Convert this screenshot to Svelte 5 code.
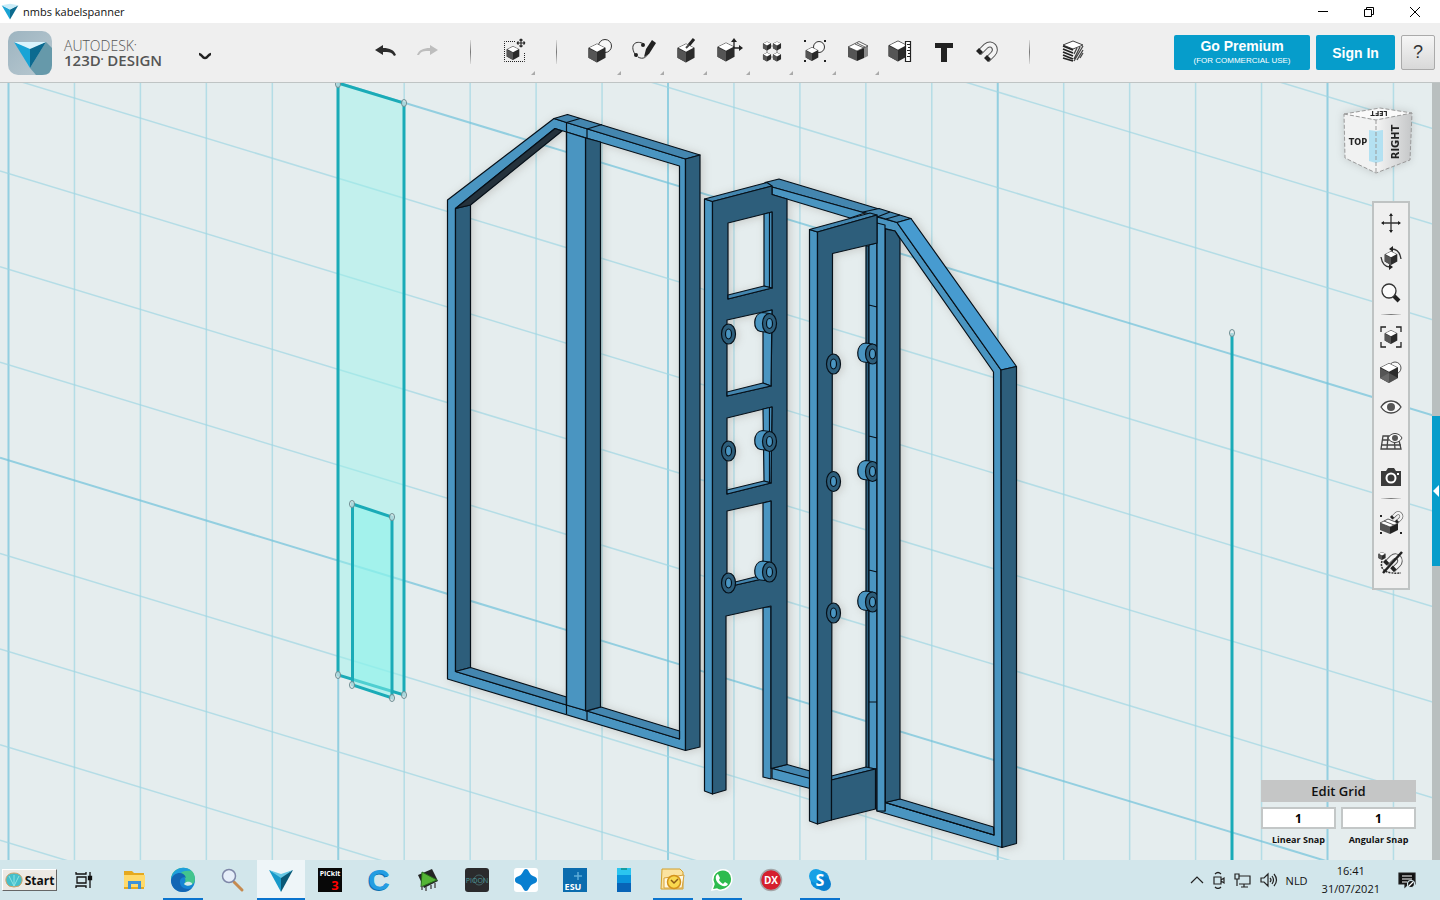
<script lang="ts">
	type Tool = { id: string; label: string; more?: boolean };

	const tools: Tool[] = [
		{ id: 'undo', label: 'Undo' },
		{ id: 'redo', label: 'Redo' },
		{ id: 'sep', label: '' },
		{ id: 'transform', label: 'Transform', more: true },
		{ id: 'sep', label: '' },
		{ id: 'primitives', label: 'Primitives', more: true },
		{ id: 'sketch', label: 'Sketch', more: true },
		{ id: 'construct', label: 'Construct', more: true },
		{ id: 'modify', label: 'Modify', more: true },
		{ id: 'pattern', label: 'Pattern', more: true },
		{ id: 'grouping', label: 'Grouping', more: true },
		{ id: 'combine', label: 'Combine', more: true },
		{ id: 'measure', label: 'Measure' },
		{ id: 'text', label: 'Text' },
		{ id: 'snap', label: 'Snap' },
		{ id: 'sep', label: '' },
		{ id: 'material', label: 'Material' }
	];

	const navGroups = [
		[
			{ id: 'pan', label: 'Pan' },
			{ id: 'orbit', label: 'Orbit' },
			{ id: 'zoom', label: 'Zoom' }
		],
		[
			{ id: 'fit', label: 'Fit' },
			{ id: 'shading', label: 'Shading' },
			{ id: 'visibility', label: 'Visibility' },
			{ id: 'grid', label: 'Grid visibility' },
			{ id: 'camera', label: 'Screenshot' }
		],
		[
			{ id: 'groupsnap', label: 'Snap when grouping' },
			{ id: 'nosnap', label: 'Snapping off' }
		]
	];

	const apps = [
		{ id: 'explorer', label: 'File Explorer' },
		{ id: 'edge', label: 'Edge', open: true },
		{ id: 'search', label: 'Search' },
		{ id: 'design', label: '123D Design', open: true, active: true },
		{ id: 'pickit', label: 'PICkit 3' },
		{ id: 'cura', label: 'Cura' },
		{ id: 'chip', label: 'Circuit' },
		{ id: 'train', label: 'Train control' },
		{ id: 'star', label: 'Diamond' },
		{ id: 'esu', label: 'ESU' },
		{ id: 'phone', label: 'Your Phone' },
		{ id: 'outlook', label: 'Outlook', open: true },
		{ id: 'whatsapp', label: 'WhatsApp', open: true },
		{ id: 'dx', label: 'DX' },
		{ id: 'skype', label: 'Skype', open: true }
	];

	const columns = Array.from({ length: 22 }, (_, i) => ({ x: 8.5 + i * 65.95, major: i % 5 === 0 }));
	const rows = Array.from({ length: 13 }, (_, i) => ({ y: -307 + i * 95.6, major: (i - 3) % 5 === 0 }));

	// openings of the ladder panel: outline, inner side, sill
	const windows = [
		['728,223 772,212 772,288 728,299', '764,214 772,212 772,288 764,286', '728,295 764,286 772,288 728,299'],
		['727,320 772,310 771,386 727,396', '763,312 772,310 771,386 763,383', '727,392 763,383 771,386 727,396'],
		['727,418 772,407 771,483 727,494', '763,409 772,407 771,483 764,481', '727,490 764,481 771,483 727,494'],
		['727,511 771,501 771,577 727,587', '763,503 771,501 771,577 763,575', '727,584 763,575 771,577 727,587']
	];

	let linear = $state('1');
	let angular = $state('1');
</script>

{#snippet cube(x: number, y: number, r: number)}
	<g transform="translate({x} {y}) scale({r})">
		<path d="M0-1 .9-.55V.5L0 1-.9.5V-.55z" fill="#2b2b2b" />
		<path d="M-.9-.5 0-.05V1L-.9.5z" fill="#555" />
		<path d="M0-.94 .8-.54 0-.12-.8-.54z" fill="#fff" />
	</g>
{/snippet}

{#snippet logo()}
	<path d="M-10-6 0-1V11z" fill="#1aa3d4" />
	<path d="M10-6 0-1V11z" fill="#0c6b8f" />
	<path d="M-10-6 0-8 10-6 0-1z" fill="#c9ecf8" />
{/snippet}

{#snippet cross()}
	<path d="M-4 0H4M0-4V4M-4 0l1.500-1.500M-4 0l1.500 1.500M4 0l-1.500-1.500M4 0l-1.500 1.500M0-4l-1.500 1.500M0-4l1.500 1.500M0 4l-1.500-1.500M0 4l1.500-1.500" fill="none" stroke="#2b2b2b" stroke-width="1.200" />
{/snippet}

{#snippet magnet()}
	<path d="M-7 2 0-5C6-10 12-2 7 3L1 9" fill="none" stroke="#555" stroke-width="6" />
	<path d="M-7 2 0-5C6-10 12-2 7 3L1 9" fill="none" stroke="#f4f4f4" stroke-width="4" />
	<path d="M-10 0-7-3-3 1-6 4zM-2 7 1 4 5 8 2 11z" fill="#222" />
{/snippet}

{#snippet toolIcon(id: string)}
	<svg width="28" height="28" viewBox="-14 -14 28 28" aria-hidden="true">
		{#if id === 'undo'}
			<path d="M-10-1-2-6V-3C5-3 9-1 11 4L9 5C7 1 4 1-2 1V4z" fill="#2b2b2b" />
		{:else if id === 'redo'}
			<path d="M10-1 2-6V-3C-5-3-9-1-11 4L-9 4C-7 0-4 0 2 0V4z" fill="#bdbdbd" />
		{:else if id === 'transform'}
			<path d="M1-9.500H-9.500V10.500H10.500V1" fill="none" stroke="#222" stroke-dasharray="1 1" />
			{@render cube(-1, 2, 7)}
			<g transform="translate(7 -8)">{@render cross()}</g>
		{:else if id === 'primitives'}
			<circle cx="5" cy="-5" r="6.500" fill="#f8f8f8" stroke="#333" />
			{@render cube(-3, 2, 9.5)}
		{:else if id === 'sketch'}
			<path d="M1-7C-8-12-15-5-6 6M-5 6C0 9 4 6 5 2" fill="none" stroke="#333" />
			<path d="M3-2 9-11 13-8 6 3 1 6z" fill="#222" />
			<circle cx="0" cy="-6" r="2" fill="#222" /><circle cx="-7" cy="4" r="2" fill="#222" />
		{:else if id === 'construct'}
			{@render cube(0, 2, 9.5)}
			<path d="M0-3 3-6" stroke="#444" stroke-width="2" />
			<path d="M3-6 8-12" stroke="#222" stroke-width="3" />
		{:else if id === 'modify'}
			{@render cube(-3, 1, 9.5)}
			<path d="M5-11V-3H12" fill="none" stroke="#222" stroke-width="1.300" />
			<path d="M5-13 8-9H2zM14-3 10-6V0z" fill="#222" />
		{:else if id === 'pattern'}
			<path d="M-5-5H5V6H-5z" fill="none" stroke="#888" />
			{@render cube(-5, -5, 4.5)}{@render cube(5, -5, 4.5)}{@render cube(-5, 6, 4.5)}{@render cube(5, 6, 4.5)}
		{:else if id === 'grouping'}
			<path d="M-11-11h2v2h-2zM9-11h2v2H9zM-11 9h2v2h-2zM9 9h2v2H9z" fill="#222" />
			<circle cx="4" cy="-4" r="5.500" fill="#f8f8f8" stroke="#333" />
			{@render cube(-3, 3, 7)}
		{:else if id === 'combine'}
			<path d="M6-3 10-5V5L6 7z" fill="#888" />
			<path d="M-10-4-1 0V10L-10 6z" fill="#555" />
			<path d="M-1 0 6-3V7L-1 10z" fill="#222" />
			<path d="M-10-4 1-9.500 10-5-1 0z" fill="#fff" stroke="#333" stroke-width=".8" />
			<path d="M-3-7 6-3M-1-8 7-4" stroke="#333" stroke-width=".8" />
		{:else if id === 'measure'}
			{@render cube(-3, 0, 10.5)}
			<path d="M4.500-9.500H9.500V10.500H4.500z" fill="#fff" stroke="#222" stroke-width="1.200" />
			<path d="M6-6.500H10M7-3.500H10M6-.5H10M7 2.500H10M6 5.500H10" stroke="#222" />
		{:else if id === 'text'}
			<path d="M-9-8H9V-3H3V11H-3V-3H-9z" fill="#222" />
		{:else if id === 'snap'}
			<g transform="translate(-1 0)">{@render magnet()}</g>
		{:else if id === 'material'}
			<path d="M-10-6 0-10 10-6 0-2z" fill="#fff" stroke="#444" />
			<path d="M-10-5 0-1M-10-2 0 2M-10 1 0 5M-10 4 0 8M-10 7 0 10" stroke="#222" stroke-width="1.800" />
			<path d="M1 3 4-3M1 8 7-4M1 10 10-5M4 9 10-1M7 7 10 2" stroke="#444" stroke-width="1.300" />
		{/if}
	</svg>
{/snippet}

{#snippet navIcon(id: string)}
	<svg width="26" height="26" viewBox="-13 -13 26 26" aria-hidden="true">
		{#if id === 'pan'}
			<path d="M-9 0H9M0-9V9" stroke="#333" stroke-width="1.300" />
			<path d="M-10 0-7-2V2zM10 0 7-2V2zM0-10-2-7H2zM0 10-2 7H2z" fill="#222" />
		{:else if id === 'orbit'}
			{@render cube(0, 0, 7)}
			<path d="M1-9C6-9 9-5 10 1M-1 9C-6 9-9 5-10-1" fill="none" stroke="#333" stroke-width="1.300" />
			<path d="M-2-9 2-12V-6zM2 9-2 12V6z" fill="#222" />
		{:else if id === 'zoom'}
			<path d="M3 3 8 8" stroke="#222" stroke-width="4" />
			<circle cx="-2" cy="-2" r="7" fill="#fafafa" stroke="#333" stroke-width="1.300" />
		{:else if id === 'fit'}
			{@render cube(0, 0, 7)}
			<path d="M-5-10H-10V-5M5-10H10V-5M-5 10H-10V5M5 10H10V5" fill="none" stroke="#222" stroke-width="1.300" />
		{:else if id === 'shading'}
			<circle cx="4" cy="-4" r="6" fill="#f8f8f8" stroke="#555" />
			{@render cube(-2, 1, 10)}
			<path d="M-11 6-2 1 7 6-2 11z" fill="#888" opacity=".4" />
		{:else if id === 'visibility'}
			<path d="M-10 0C-5-8 5-8 10 0 5 8-5 8-10 0z" fill="#fafafa" stroke="#444" stroke-width="1.300" />
			<circle r="4" fill="#555" />
		{:else if id === 'grid'}
			<path d="M-8-6H7L10 7H-10zM-9-2H9M-10 3H10M-3-6-4 7M3-6 4 7" fill="none" stroke="#444" stroke-width="1.300" />
			<path d="M-3-4C0-10 8-10 11-4 8 2 0 2-3-4z" fill="#fafafa" stroke="#444" />
			<circle cx="4" cy="-4" r="3" fill="#555" />
		{:else if id === 'camera'}
			<path d="M-10-6H-5L-3-9H3L5-6H10V9H-10z" fill="#3a3a3a" />
			<circle cy="1" r="4.500" fill="#3a3a3a" stroke="#fff" stroke-width="2" />
			<path d="M6-4H8V-2H6z" fill="#fff" />
		{:else if id === 'groupsnap'}
			<path d="M-11-8h2v2h-2zM-11 9h2v2h-2zM9 9h2v2H9z" fill="#222" />
			<path d="M-11 0-1 4V11L-11 7z" fill="#555" /><path d="M-1 4 7 0V7L-1 11z" fill="#222" />
			<path d="M-11 0-3-4 7 0-1 4zM-7-2 3 2" fill="#fff" stroke="#333" stroke-width=".8" />
			<g transform="translate(5 -6) scale(.6)">{@render magnet()}</g>
		{:else if id === 'nosnap'}
			{@render cube(-9, -7, 4)}
			<path d="M-9-2C-12 8-3 11 10 10" fill="none" stroke="#333" stroke-width="1.500" stroke-dasharray="2 1" />
			<g transform="translate(1 -1) scale(.9)">{@render magnet()}</g>
			<path d="M-8 10 11-11" stroke="#222" stroke-width="2.500" />
		{/if}
	</svg>
{/snippet}

{#snippet appIcon(id: string)}
	<svg width="26" height="26" viewBox="-13 -13 26 26" aria-hidden="true">
		{#if id === 'explorer'}
			<path d="M-10-9H-2L0-7H10V9H-10z" fill="#e5a91f" /><path d="M-10-5H11V7H-10z" fill="#ffda6b" />
			<path d="M-6 9V1H7V9H4V4H-3V9z" fill="#3c91d8" />
		{:else if id === 'edge'}
			<circle r="12" fill="#1684d4" />
			<path d="M-12 0C-12-16 12-16 12-1 12 6 4 7 1 4 5-1 0-6-5-4-9-3-11-1-12 0z" fill="#43c58e" />
			<path d="M-12 0C-11-13 3-15 8-9 3-10-2-9-4-5-8-4-11-2-12 0z" fill="#1e9fdc" />
			<path d="M-12 0C-10-8 1-10 3-2 1-4-4-2-3 3-2 9 5 10 9 8 3 15-12 13-12 0z" fill="#1366b4" />
			<path d="M1 4C5-1 12 4 8 5 5 6 3 6 1 4z" fill="#d5e9ee" />
		{:else if id === 'search'}
			<path d="M2 2 10 10" stroke="#c68a4f" stroke-width="3" stroke-linecap="round" />
			<circle cx="-3" cy="-4" r="6.500" fill="#e6eef9" stroke="#7f87a8" stroke-width="1.500" />
		{:else if id === 'design'}
			<path d="M-12-10 0-4V12z" fill="#1899c9" /><path d="M12-10 0-4V12z" fill="#0a5876" /><path d="M-12-10 0-6 12-10 0-2z" fill="#65c6e3" />
		{:else if id === 'pickit'}
			<path d="M-12-12H12V12H-12z" fill="#080808" />
			<text y="-4" text-anchor="middle" font-size="7" font-weight="700" fill="#fff">PICkit</text>
			<text x="5" y="10" text-anchor="middle" font-size="13" font-weight="700" fill="#f00">3</text>
		{:else if id === 'chip'}
			<path d="M-10-5 4-11 10 1-4 8z" fill="#242424" />
			<path d="M-6-8 9 0-7 7z" fill="#54b535" stroke="#286b1b" />
			<path d="M-6 6V10M-2 7V11M3 5V9M7 3V8" stroke="#555" stroke-width="1.500" />
		{:else if id === 'train'}
			<rect x="-12" y="-12" width="24" height="24" rx="3" fill="#2b2b2d" />
			<circle cx="2" r="5" fill="none" stroke="#456568" />
			<text y="3" text-anchor="middle" font-size="7" fill="#4c9c9c">PIOON</text>
		{:else if id === 'star'}
			<rect x="-12" y="-12" width="24" height="24" rx="3" fill="#fff" />
			<path d="M0-11C3-11 3-6 6-4.500 9-3 11-3 11 0S9 3 6 4.500 3 11 0 11-3 6-6 4.500-11 3-11 0-9-3-6-4.500-3-11 0-11z" fill="#087fd0" />
		{:else if id === 'esu'}
			<path d="M-12-12H12V12H-12z" fill="#0b6cae" />
			<path d="M3-8V0M-1-4H7" stroke="#80c8e9" stroke-width="1.500" opacity=".7" />
			<text x="-2" y="10" text-anchor="middle" font-size="9" font-weight="700" fill="#fff">ESU</text>
		{:else if id === 'phone'}
			<path d="M-7-12H7V12H-7z" fill="#0864b7" /><path d="M-7-12H7V3H-7z" fill="#0a94dc" /><path d="M-7-12H7V-5H-7z" fill="#2bc5ef" />
			<path d="M-3-11H3" stroke="#075" />
		{:else if id === 'outlook'}
			<path d="M-11-11H7L10-8V9H-12z" fill="#fbe3a0" stroke="#d3a02c" />
			<path d="M-9-2 11-5 9 8H-9z" fill="#fff8e0" stroke="#d6a23a" />
			<circle cx="1" cy="2" r="6.500" fill="#f9d84f" stroke="#d3911a" stroke-width="1.500" />
			<path d="M-2 0 1 3 5-1" fill="none" stroke="#8b5a17" stroke-width="1.500" />
		{:else if id === 'whatsapp'}
			<path d="M-10 10-8 4C-14-8 4-16 9-5 13 6 0 13-5 9z" fill="#2dbb4e" stroke="#fff" stroke-width="1.500" />
			<path d="M-4-6-2-2-3 0C-2 2 0 3 1 4L3 2 6 4C4 8-1 6-4 3S-7-5-4-6z" fill="#fff" />
		{:else if id === 'dx'}
			<circle r="10.500" fill="#d5202e" stroke="#a3a5a7" stroke-width="1.500" />
			<text y="4" text-anchor="middle" font-size="10" font-weight="700" fill="#fff">DX</text>
		{:else if id === 'skype'}
			<circle r="9.500" fill="#0b8dd8" /><circle cx="-4" cy="-4" r="7" fill="#16a1e6" /><circle cx="4" cy="4" r="7" fill="#087fcf" />
			<text y="6" text-anchor="middle" font-size="16" font-weight="700" fill="#fff">S</text>
		{/if}
	</svg>
{/snippet}

{#snippet ring(x: number, y: number)}
	<ellipse cx={x} cy={y} rx="7" ry="10" class="dark" />
	<ellipse cx={x} cy={y} rx="3" ry="5" class="light" />
{/snippet}

{#snippet bolt(x: number, y: number)}
	<path d="M{x} {y - 10}L{x - 7} {y - 11}C{x - 17} {y - 10} {x - 17} {y + 7} {x - 9} {y + 8}L{x} {y + 9}z" class="light" />
	{@render ring(x, y)}
{/snippet}

<div class="window">
	<header class="titlebar">
		<svg width="20" height="20" viewBox="-12 -10 24 24" aria-hidden="true">{@render logo()}</svg>
		<span class="title">nmbs kabelspanner</span>
		<button aria-label="Minimize"><svg width="12" height="12"><path d="M1 5.500H11" /></svg></button>
		<button aria-label="Restore"><svg width="12" height="12"><path d="M1.500 3.500h7v7h-7zM3.500 3.500v-2h7v7h-2" /></svg></button>
		<button aria-label="Close"><svg width="12" height="12"><path d="M1 1 11 11M11 1 1 11" /></svg></button>
	</header>

	<nav class="toolbar">
		<div class="brand">
			<svg width="44" height="44" viewBox="-22 -22 44 44" aria-hidden="true">
				<defs><linearGradient id="badge" x2="1" y2="1"><stop stop-color="#9db4c0" /><stop offset="1" stop-color="#b9c9d1" /></linearGradient></defs>
				<rect x="-22" y="-22" width="44" height="44" rx="10" fill="url(#badge)" />
				<path d="M16-11 22-5V12Q22 22 12 22H6L0 15z" fill="#6699aa" />
				<path d="M-16-11 0-5V15z" fill="#19a4d6" /><path d="M16-11 0-5V15z" fill="#0b6a90" />
				<path d="M-16-11H16L0-4z" fill="#d9f4fd" />
			</svg>
			<div class="name">
				<span>AUTODESK<sup>•</sup></span>
				<strong>123D<sup>•</sup> DESIGN</strong>
			</div>
			<button class="menu" aria-label="Application menu">
				<svg width="16" height="8"><path d="M2 2C5 2 5 6 8 6S11 2 14 2" fill="none" stroke="#222" stroke-width="2.500" /></svg>
			</button>
		</div>

		<div class="tools">
			{#each tools as tool}
				{#if tool.id === 'sep'}
					<span class="tool-sep"></span>
				{:else}
					<button class="tool" class:more={tool.more} aria-label={tool.label}>{@render toolIcon(tool.id)}</button>
				{/if}
			{/each}
		</div>

		<div class="account">
			<button class="premium">Go Premium<small>(FOR COMMERCIAL USE)</small></button>
			<button class="signin">Sign In</button>
			<button class="help">?</button>
		</div>
	</nav>

	<main class="workspace">
		<svg class="scene" viewBox="0 83 1440 777" preserveAspectRatio="xMinYMin slice" role="img" aria-label="Model view">
			<g class="grid">
				{#each columns as c}
					<line x1={c.x} y1="83" x2={c.x} y2="860" class:major={c.major} />
				{/each}
				{#each rows as r}
					<line x1="0" y1={r.y} x2="1440" y2={r.y + 437.8} class:major={r.major} />
				{/each}
			</g>

			<g class="sketches">
				<path d="M338 83 404 103V695L338 675z" fill="#97f3ec" fill-opacity=".45" />
				<path d="M352.500 504 392 517V698L352.500 685z" fill="#84f4eb" fill-opacity=".5" />
				<path d="M1232 333V862" />
				{#each [[338, 84], [404, 103], [404, 695], [338, 675], [352, 504], [392, 517], [392, 698], [352, 685], [1232, 333]] as [x, y]}
					<ellipse cx={x} cy={y} rx="2.500" ry="3.500" class="node" />
				{/each}
			</g>

			<g class="body">
				<!-- left frame -->
				<path class="light" fill-rule="evenodd" d="M447.500 200 554 118.500 566.500 122.500 685.500 159V750.500L447.500 679zM455.500 208.500V671.500L566.500 705 587 711 679.500 739V166L566.500 132 555 128.500z" />
				<path class="top" d="M554 118.500 567.500 114.500 700 155 685.500 159 566.500 122.500z" />
				<path class="dark" d="M685.500 159 700 155V747L685.500 750.500z" />
				<path class="dark" d="M455.500 208.500 470.500 205V667.500L455.500 671.500z" />
				<path class="under" d="M455.500 208.500 555 128.500 562 131 470.500 205z" />
				<path class="top" d="M455.500 671.500 470.500 667.500 566.500 697V705z" />
				<path class="top" d="M587 711 601 707 679.500 731V739z" />
				<path class="dark" d="M585.500 138 600.500 142V707L585.500 711z" />
				<path class="light" d="M566.500 132 585.500 138V710.500L566.500 705z" />
				<path d="M566.500 122.500V714M587 129V138M587 711V720M566.500 122.500 580 118.500M587 129 602 124.500" />

				<!-- back rail -->
				<path class="top" d="M765 182.500 779 179 879 209 865 213 772 187z" />
				<path class="light" d="M772 187 865 213 850 218 772 194.500z" />
				<path class="top" d="M772 768.500 787 764.500 810 771V779z" />
				<path class="light" d="M772 768.500 812 779V789L772 778.500z" />

				<!-- ladder panel -->
				<path class="light" d="M704.500 199 712.500 201.500V794L704.500 791z" />
				<path class="top" d="M704.500 199 767 182.500 772 186 712.500 201.500z" />
				<path class="light" d="M763 607H771V779L763 777z" />
				<path class="dark" fill-rule="evenodd" d="M712.500 201.500 772 186V194.500L787 199V764.500L771 768.500V606L726 616V790L712.500 794zM{windows.map((w) => w[0]).join('zM')}z" />
				{#each windows as [, side, sill]}
					<polygon points={side} class="light" />
					<polygon points={sill} class="top" />
				{/each}
				<path d="M769.500 213V288M769.500 408V482" />
				{#each [334, 451, 583] as y}{@render ring(728.5, y)}{/each}
				{#each [323.5, 441.5, 572] as y}{@render bolt(769.5, y)}{/each}

				<!-- right frame -->
				<path class="light" fill-rule="evenodd" d="M877 217 897 222.500 1001 370 1002 847.500 877 811zM877 226.500V800L994 835 993.500 372 895 231z" />
				<path class="top" d="M863 212 879 208.500 911 218.500 897 222.500z" />
				<path class="slope" d="M897 222.500 911 218.500 1016.500 366.500 1001 370z" />
				<path class="dark" d="M1001 370 1016.500 366.500V843.500L1002 847.500z" />
				<path class="top" d="M885 802.500 900 799 993.500 827 994 835z" />
				<path class="dark" d="M885 229 895 231 900 239V799L885 802.500z" />
				<path class="light" d="M877 226.500 885 229V811L877 810z" />
				<path d="M877 217 890 212M886 219 900 215M877 800 994 835" />

				<!-- front panel -->
				<path class="dark" d="M866 246H869V768H866z" />
				<path class="light" d="M869 245 877 243V769L869 768zM869 305 877 307M869 436 877 438M869 570 877 572M869 702H877" />
				{#each [354, 471.500, 602] as y}{@render bolt(872.5, y)}{/each}
				<path class="light" d="M877 223V811H885V225z" />
				<path class="top" d="M831.500 776 866 767 875.500 769 831.500 780z" />
				<path class="light" d="M809.500 229.500 817.500 232V824L809.500 821z" />
				<path class="top" d="M809.500 229.500 870 213 877 215 817.500 232z" />
				<path class="dark" d="M817.500 232 877 215V243L832.500 253.500 831.500 820 817.500 824z" />
				<path class="dark" d="M831.500 780 875.500 769V809L831.500 820z" />
				{#each [364, 481.500, 613] as y}{@render ring(833.5, y)}{/each}
			</g>
		</svg>

		<svg class="viewcube" width="86" height="76" viewBox="1335 102 86 76" role="img" aria-label="View cube">
			<defs><linearGradient id="side"><stop stop-color="#f4f4f4" /><stop offset="1" stop-color="#c5c7c8" /></linearGradient></defs>
			<path d="M1344 114 1380 108 1412 113 1376 120z" fill="#fafafa" />
			<path d="M1344 114 1376 120V173L1345 158z" fill="#f1f2f2" />
			<path d="M1376 120 1412 113 1410 160 1376 173z" fill="url(#side)" />
			<path d="M1369 130 1376 131 1383 130V161L1376 163 1369 161z" fill="#a9def2" opacity=".85" />
			<path d="M1344 114 1376 120 1412 113M1344 114 1380 108 1412 113 1410 160 1376 173 1345 158zM1376 120V173" fill="none" stroke="#999" stroke-dasharray="4 2" />
			<text x="1358" y="145" text-anchor="middle" font-size="9">TOP</text>
			<text transform="translate(1399 142) rotate(-90)" text-anchor="middle" font-size="11">RIGHT</text>
			<text transform="translate(1379 111) rotate(180)" text-anchor="middle" font-size="7">LEFT</text>
		</svg>

		<aside class="navbar">
			{#each navGroups as group}
				<div class="nav-group">
					{#each group as item}
						<button aria-label={item.label}>{@render navIcon(item.id)}</button>
					{/each}
				</div>
			{/each}
		</aside>

		<div class="snap-panel">
			<button class="edit-grid">Edit Grid</button>
			<div class="snap-fields">
				<div><input id="linear" bind:value={linear} /><label for="linear">Linear Snap</label></div>
				<div><input id="angular" bind:value={angular} /><label for="angular">Angular Snap</label></div>
			</div>
		</div>

		<div class="drawer">
			<button aria-label="Open parts panel"><svg width="6" height="12"><path d="M6 0V12L0 6z" fill="#fff" /></svg></button>
		</div>
	</main>

	<footer class="taskbar">
		<button class="start">
			<svg width="18" height="16" viewBox="0 0 18 16" aria-hidden="true">
				<path d="M4 14C-2 9 1 1 9 1S20 9 14 14L9 15z" fill="#45bfcb" stroke="#d5a066" />
				<path d="M9 14 4 4M9 14V3M9 14 14 4" stroke="#8de3e5" />
			</svg>
			Start
		</button>
		<button class="taskview" aria-label="Task view">
			<svg width="18" height="18" fill="none" stroke="#111" stroke-width="1.300"><path d="M1 1V3H11V1M1 17V15H11V17M2 6H11V12H2zM15 1V17" /><path d="M13.500 5.500h3v3h-3z" fill="#111" /></svg>
		</button>
		<div class="apps">
			{#each apps as app}
				<button class:open={app.open} class:active={app.active} aria-label={app.label}>
					{#if app.id === 'cura'}
						<span class="cura">C</span>
					{:else}
						{@render appIcon(app.id)}
					{/if}
				</button>
			{/each}
		</div>

		<div class="tray">
			<button aria-label="Show hidden icons"><svg width="14" height="16"><path d="M1 11 7 5 13 11" /></svg></button>
			<button aria-label="Meet now"><svg width="14" height="18"><path d="M2 6H9V13H2zM9 9 12 7V12L9 10M3 3Q6 0 9 3M3 16Q6 19 9 16" /></svg></button>
			<button aria-label="Network"><svg width="18" height="16"><path d="M5 4H16V12H5M10 12V15M7 15H14M1 2H5V7H1zM3 7V14" /></svg></button>
			<button aria-label="Volume"><svg width="18" height="16"><path d="M1 6H4L8 2V14L4 10H1zM10 6Q12 8 10 10M12 4Q15 8 12 12M14 2Q19 8 14 14" /></svg></button>
			<button class="lang">NLD</button>
			<button class="clock"><span>16:41</span><span>31/07/2021</span></button>
			<button aria-label="Notifications">
				<svg width="18" height="18"><path d="M1 2H17V13H10L7 16V13H1z" fill="#111" /><path d="M4 5H14M4 8H14M4 11H9" stroke="#fff" /><circle cx="13" cy="13" r="3.500" fill="#111" stroke="#d2e6eb" /><path d="M11 15 15 11" stroke="#fff" /></svg>
			</button>
		</div>
	</footer>
</div>

<style>
	:global(body) {
		margin: 0;
	}

	.window {
		display: flex;
		flex-direction: column;
		height: 100vh;
		overflow: hidden;
		font-family: 'Open Sans', 'Noto Sans', sans-serif;
		color: #111;
	}

	button {
		display: flex;
		align-items: center;
		justify-content: center;
		padding: 0;
		border: none;
		background: none;
		font: inherit;
		color: inherit;
	}

	.titlebar {
		display: flex;
		align-items: center;
		height: 23px;
		flex: none;
		background: #fff;
		font-size: 11px;
	}

	.title {
		flex: 1;
		padding-left: 3px;
	}

	.titlebar button {
		width: 46px;
		height: 20px;
	}

	.titlebar button svg {
		fill: none;
		stroke: #000;
	}

	.titlebar button:last-child {
		margin-right: 2px;
	}

	.toolbar {
		display: flex;
		height: 59px;
		flex: none;
		background: #efefef;
		border-bottom: 1px solid #bfc4c4;
	}

	.brand {
		display: flex;
		align-items: center;
		width: 355px;
		padding-left: 8px;
	}

	.name {
		display: flex;
		flex-direction: column;
		width: 130px;
		padding-left: 12px;
		color: #555;
		font-size: 14px;
		line-height: 15px;
	}

	.name span {
		font-weight: 300;
	}

	.name strong {
		font-size: 15px;
		font-weight: 600;
	}

	sup {
		font-size: 7px;
		line-height: 1px;
		vertical-align: 4px;
	}

	.menu {
		padding-top: 7px;
		margin-left: 3px;
	}

	.tools {
		display: flex;
	}

	.tool {
		position: relative;
		width: 43px;
		padding-bottom: 4px;
	}

	.tool.more::after {
		content: '';
		position: absolute;
		right: 0;
		bottom: 7px;
		border: 2px solid transparent;
		border-right-color: #aaa;
		border-bottom-color: #aaa;
	}

	.tool-sep {
		width: 1px;
		height: 24px;
		margin: 17px 21px;
		background: linear-gradient(#ddd, #777, #ddd);
	}

	.account {
		display: flex;
		align-items: center;
		gap: 6px;
		margin-left: auto;
		padding-right: 5px;
		font-family: 'Liberation Sans', Arial, sans-serif;
	}

	.account button {
		height: 35px;
		border-radius: 2px;
		background: #069dcb;
		color: #fff;
		font-size: 14px;
		font-weight: 700;
	}

	.account .premium {
		flex-direction: column;
		width: 136px;
	}

	small {
		font-size: 8px;
		font-weight: 400;
		line-height: 14px;
	}

	.account .signin {
		width: 79px;
	}

	.account .help {
		width: 34px;
		border: 1px solid #aaa;
		background: linear-gradient(#f6f6f6, #d8d8d8);
		color: #333;
		font-size: 18px;
		font-weight: 400;
	}

	.workspace {
		position: relative;
		display: flex;
		flex: 1;
		justify-content: flex-end;
		min-height: 0;
		background: #e5edee;
		overflow: hidden;
	}

	.scene {
		position: absolute;
		inset: 0;
		width: 100%;
		height: 100%;
	}

	.grid line {
		stroke: #9fd5e2;
		stroke-opacity: 0.7;
		stroke-width: 1.5;
	}

	.grid line.major {
		stroke: #70c2da;
		stroke-width: 2;
	}

	.sketches path {
		stroke: #1aabb7;
		stroke-width: 3;
	}

	.node {
		fill: #e5edee;
		fill-opacity: 0.7;
		stroke: #6b8b90;
	}

	.body {
		fill: none;
		stroke: #061019;
		stroke-width: 1.2;
		stroke-linejoin: round;
		filter: drop-shadow(2px 1px 4px rgba(60, 40, 20, 0.18));
	}

	.light {
		fill: #4a95c1;
	}

	.slope {
		fill: #479bd0;
	}

	.top {
		fill: #4486af;
	}

	.dark {
		fill: #2d5e7b;
	}

	.under {
		fill: #25323c;
	}

	.viewcube {
		position: absolute;
		top: 19px;
		right: 19px;
		filter: drop-shadow(0 0 4px rgba(0, 0, 0, 0.15));
	}

	.viewcube text {
		font-family: 'Liberation Sans Narrow', 'DejaVu Sans Condensed', sans-serif;
		font-weight: 700;
		fill: #222;
	}

	.navbar {
		position: absolute;
		top: 118px;
		right: 30px;
		width: 34px;
		padding: 2px 0 5px;
		border: 2px solid #bfc3c3;
		background: #efefef;
	}

	.nav-group button {
		width: 100%;
		height: 35px;
	}

	.nav-group:last-child button {
		height: 40px;
	}

	.nav-group + .nav-group::before {
		content: '';
		display: block;
		height: 1px;
		margin: 4px 7px;
		background: linear-gradient(90deg, #ddd, #777, #ddd);
	}

	.snap-panel {
		position: absolute;
		right: 24px;
		bottom: 13px;
		width: 155px;
	}

	.edit-grid {
		width: 100%;
		height: 22px;
		background: #c5c6c6;
		font-size: 13px;
		font-weight: 600;
	}

	.snap-fields {
		display: flex;
		gap: 5px;
		padding-top: 5px;
	}

	.snap-fields div {
		flex: 1;
		text-align: center;
	}

	input {
		display: block;
		box-sizing: border-box;
		width: 100%;
		height: 22px;
		padding: 0;
		border: 2px solid #c3c7c7;
		background: #fff;
		font: 700 12px 'Open Sans', sans-serif;
		text-align: center;
	}

	label {
		display: block;
		padding-top: 4px;
		font-size: 9px;
		font-weight: 700;
		line-height: 14px;
	}

	.drawer {
		position: relative;
		display: flex;
		align-items: center;
		width: 8px;
		padding-top: 38px;
		background: #b9bfbf;
	}

	.drawer button {
		width: 8px;
		height: 150px;
		background: #069dcb;
	}

	.taskbar {
		display: flex;
		align-items: center;
		height: 40px;
		flex: none;
		background: #d2e6eb;
		font-size: 12px;
	}

	.start {
		gap: 2px;
		width: 55px;
		height: 22px;
		margin-left: 2px;
		border: 1px solid;
		border-color: #fff #666 #666 #fff;
		background: #ece9e4;
		font-weight: 700;
	}

	.taskview {
		width: 53px;
		height: 40px;
	}

	.apps {
		display: flex;
		gap: 1px;
	}

	.apps button {
		position: relative;
		width: 48px;
		height: 40px;
	}

	.apps .active {
		background: #eef5f8;
	}

	.apps .open::after {
		content: '';
		position: absolute;
		bottom: 0;
		left: 4px;
		right: 4px;
		height: 2px;
		background: #0b74ce;
	}

	.apps .active::after {
		left: 0;
		right: 0;
	}

	.cura {
		color: #249de2;
		font: 700 30px/40px 'Liberation Sans', Arial, sans-serif;
		text-shadow: -1px 1px #0b73b1;
	}

	.tray {
		display: flex;
		align-items: center;
		gap: 8px;
		margin-left: auto;
		padding-right: 24px;
	}

	.tray svg {
		fill: none;
		stroke: #222;
		stroke-width: 1.2;
	}

	.lang {
		font-size: 11px;
	}

	.clock {
		flex-direction: column;
		padding: 0 10px 0 6px;
		font-size: 11px;
		line-height: 18px;
	}
</style>
